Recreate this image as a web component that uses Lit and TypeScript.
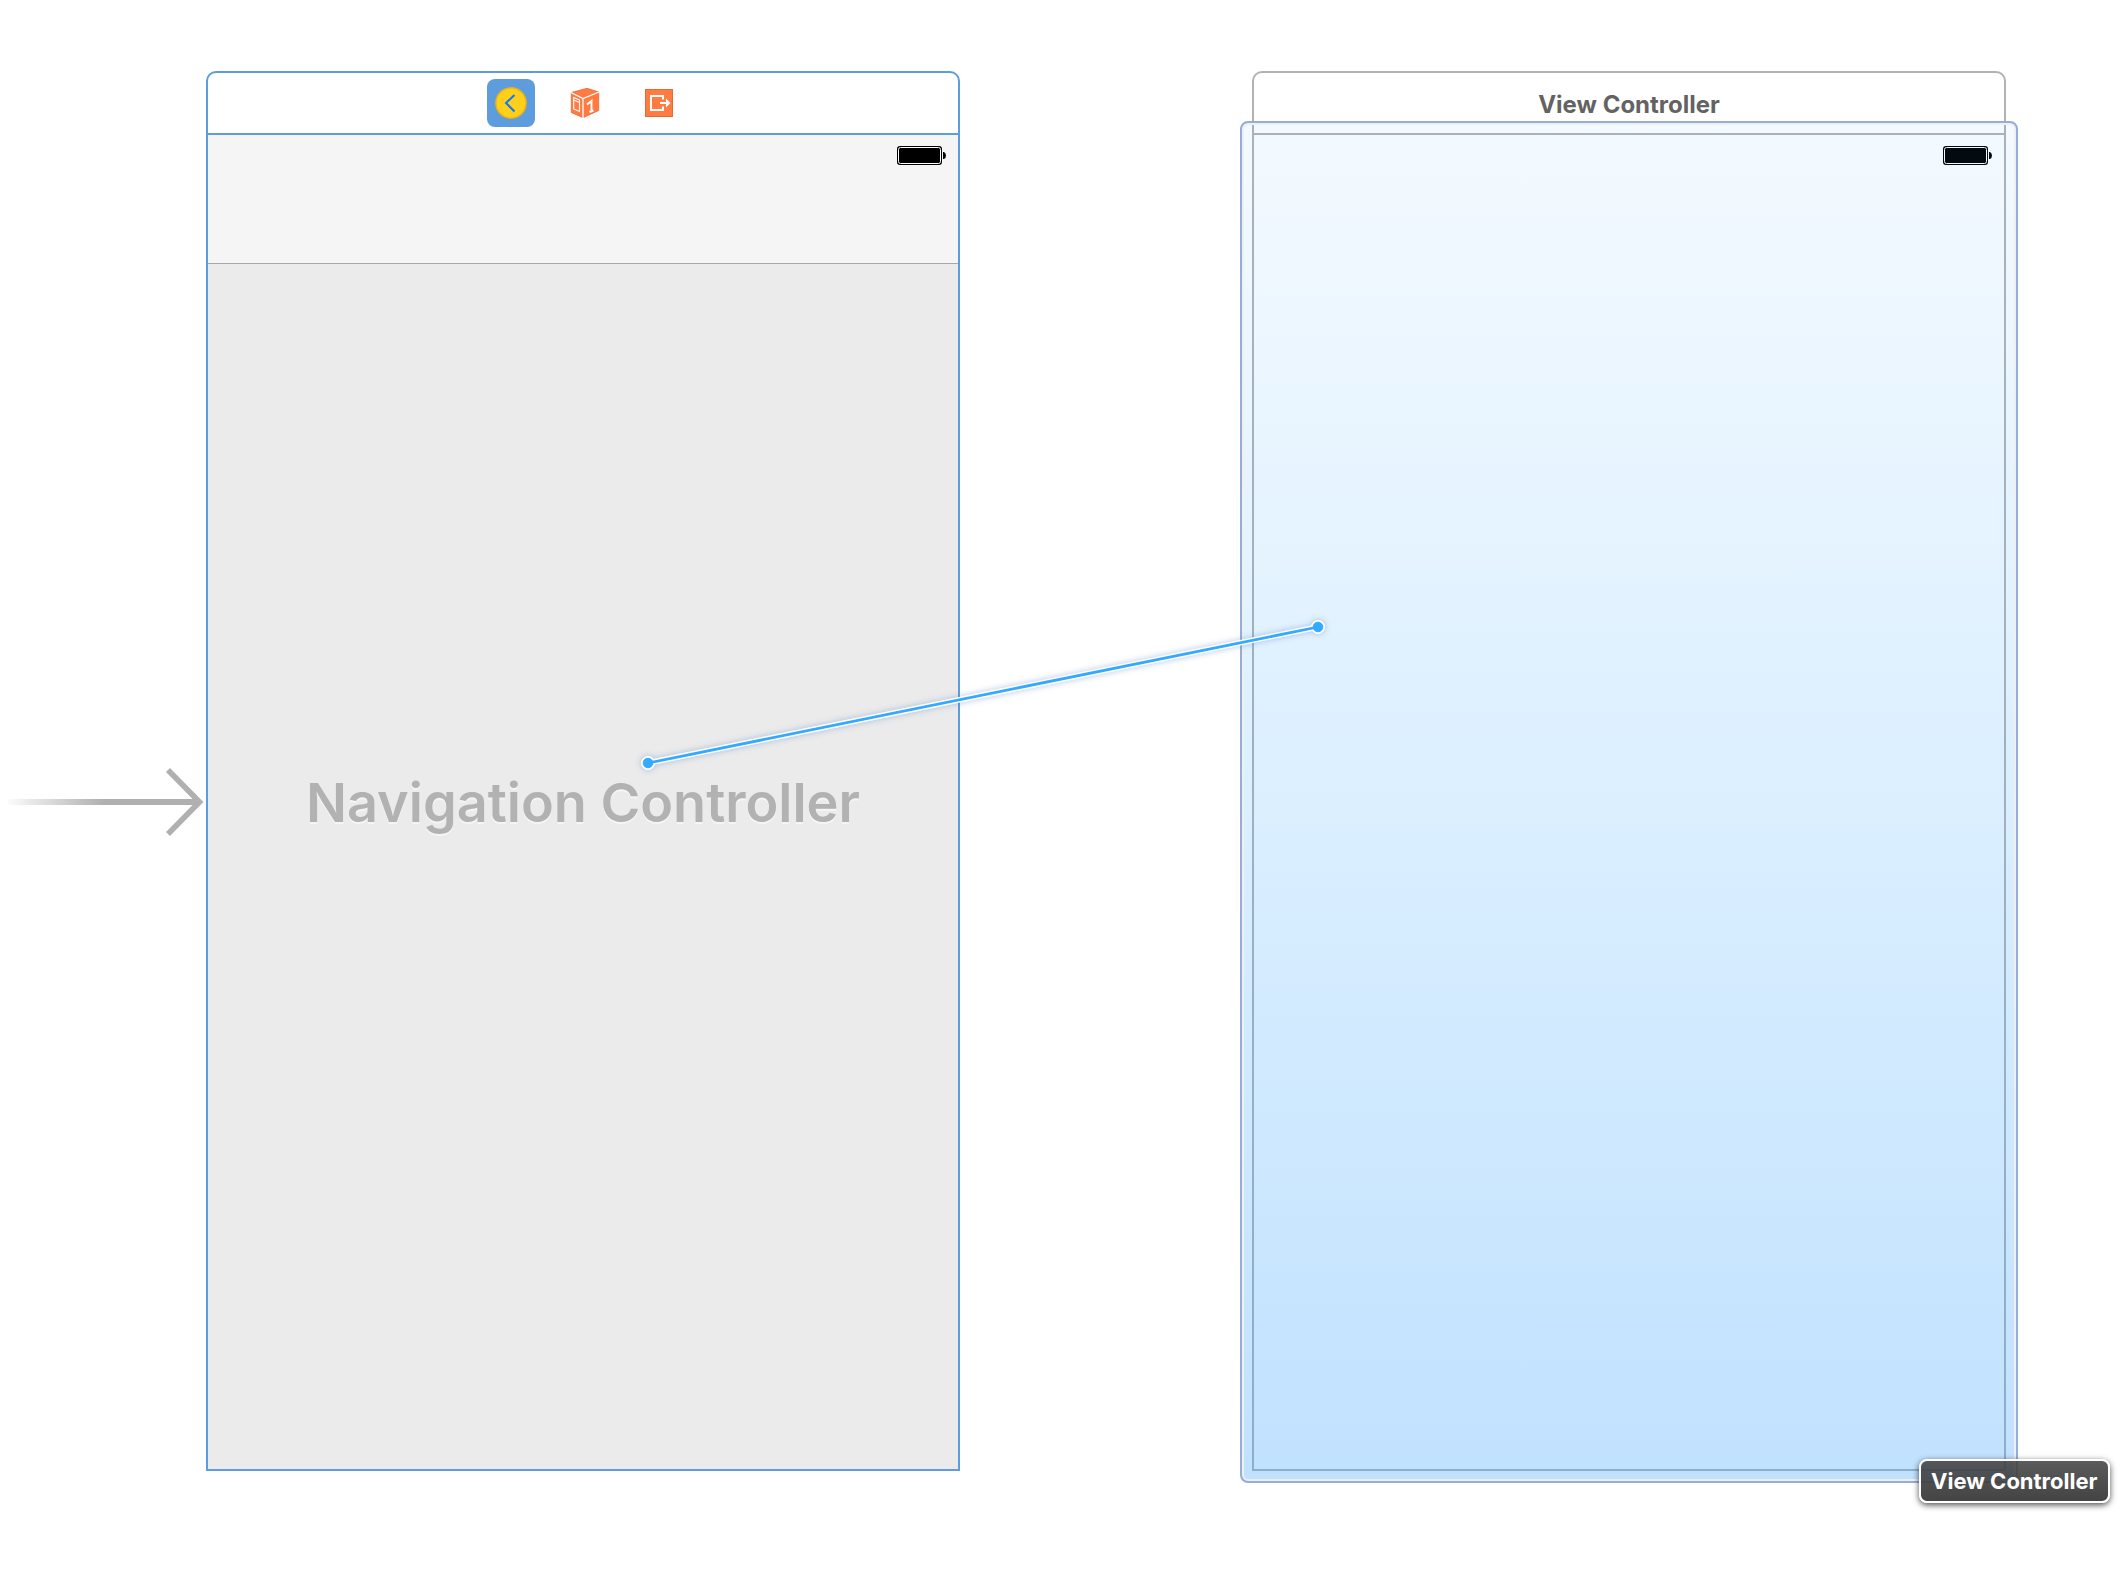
import { LitElement, html, svg, css } from "lit";
import { customElement, property } from "lit/decorators.js";
import { classMap } from "lit/directives/class-map.js";
import { styleMap } from "lit/directives/style-map.js";

const place = (x: number, y: number) => styleMap({ left: `${x}px`, top: `${y}px` });

const battery = html`
  <svg class="battery" viewBox="0 0 49 19" role="img" aria-label="Battery full">
    <rect x="0" y="0" width="45" height="19" rx="3" fill="#000" />
    <rect x="1.5" y="1.5" width="42" height="16" rx="2" fill="none" stroke="#fff" />
    <path d="M46 6h1q2 1 2 3.500t-2 3.500h-1z" fill="#000" />
  </svg>
`;

const controllerIcon = svg`
  <svg viewBox="0 0 48 48" aria-hidden="true">
    <circle cx="24" cy="24" r="15.200" fill="#ffcf1a" stroke="#e6b01f" stroke-width="1.400" />
    <path d="M27.500 16 L19 24 L27.500 32.500" fill="none" stroke="#0a7bf2" stroke-width="2" />
  </svg>`;

const responderIcon = svg`
  <svg viewBox="0 0 48 48" aria-hidden="true">
    <path d="M26 9.300 L37.700 13 L37.700 31.500 L22 38.700 L10.300 33.500 L10.300 13.500 Z" fill="#ff7b42" stroke="#e56a36" stroke-width="0.800" />
    <path d="M10 13.500 L22 19.500 L38 13 M22 19.500 V39" fill="none" stroke="#fff" stroke-width="1.300" />
    <path d="M12.700 18.500 L18.500 21 V32.500 L12.700 30 Z M12.700 21 L18.500 23.500" fill="none" stroke="#fff" stroke-width="1.100" />
    <path d="M26 25.500 L30.500 22 V32 M28.500 33 L32.500 31.500" fill="none" stroke="#fff" stroke-width="1.900" />
  </svg>`;

const exitIcon = svg`
  <svg viewBox="0 0 48 48" aria-hidden="true">
    <rect x="10.500" y="10.500" width="27" height="27" fill="#ff7b42" stroke="#e56a36" />
    <path d="M28 20.500 V17 H16 V31 H28 V27.500" fill="none" stroke="#fff" stroke-width="2" />
    <path d="M25 23 H31 V19.500 L35.500 24 L31 28.500 V25 H25 Z" fill="#fff" />
  </svg>`;

@customElement("scene-dock")
class SceneDock extends LitElement {
  static styles = css`
    :host {
      display: flex;
      justify-content: center;
      gap: 26px;
      padding-left: 4px;
    }
    .item {
      width: 48px;
      height: 48px;
      padding: 0;
      border: 0;
      border-radius: 8px;
      background: transparent;
    }
    .item.selected {
      background: #5e9ddd;
    }
    .item svg {
      display: block;
      width: 48px;
      height: 48px;
    }
  `;
  render() {
    const items = [
      { label: "Navigation Controller", icon: controllerIcon, selected: true },
      { label: "First Responder", icon: responderIcon, selected: false },
      { label: "Exit", icon: exitIcon, selected: false },
    ];
    return items.map(
      (i) => html`<button
        class=${classMap({ item: true, selected: i.selected })}
        aria-label=${i.label}
        aria-pressed=${i.selected ? "true" : "false"}
      >${i.icon}</button>`
    );
  }
}

@customElement("storyboard-scene")
class StoryboardScene extends LitElement {
  @property() kind: "navigation" | "view" = "view";
  @property() name = "";

  static styles = css`
    :host {
      display: block;
      box-sizing: border-box;
      --line: #b2b2b2;
    }
    :host([kind="navigation"]) {
      --line: #5e9ddd;
    }
    .scene {
      display: flex;
      flex-direction: column;
      box-sizing: border-box;
      min-height: 1400px;
      border: 2px solid var(--line);
      border-radius: 10px 10px 0 0;
      background: #fff;
    }
    .header {
      display: flex;
      align-items: center;
      justify-content: center;
      height: 60px;
      border-bottom: 2px solid var(--line);
    }
    .title {
      margin: 0;
      padding-top: 4px;
      font: 700 24px/28px Inter, "Liberation Sans", sans-serif;
      color: #636363;
    }
    .status {
      display: flex;
      justify-content: flex-end;
      padding: 11px 12px 0 0;
    }
    .battery {
      display: block;
      width: 49px;
      height: 19px;
    }
    .navbar {
      box-sizing: border-box;
      height: 129px;
      border-bottom: 1px solid #a7a7a7;
      background: #f5f5f5;
    }
    .body {
      display: flex;
      flex: 1;
      align-items: center;
      justify-content: center;
    }
    .navigation .body {
      background: #ebebeb;
    }
    .placeholder {
      margin: 0;
      padding-bottom: 128px;
      font: 600 54px/68px Inter, "Liberation Sans", sans-serif;
      color: #b2b2b2;
      text-shadow: 0 2px 0 #f5f5f5;
      white-space: nowrap;
    }
  `;

  render() {
    const nav = this.kind === "navigation";
    return html`
      <article class=${classMap({ scene: true, navigation: nav })}>
        <header class="header">
          ${nav ? html`<scene-dock></scene-dock>` : html`<h2 class="title">${this.name}</h2>`}
        </header>
        <div class=${classMap({ navbar: nav })}><div class="status">${battery}</div></div>
        <div class="body">${nav ? html`<p class="placeholder">${this.name}</p>` : null}</div>
      </article>
    `;
  }
}

@customElement("app-root")
class AppRoot extends LitElement {
  static styles = css`
    :host {
      display: block;
    }
    .canvas {
      position: relative;
      min-height: 100vh;
      overflow: hidden;
      background: #fff;
    }
    .node,
    .entry,
    .connection,
    .target,
    .hint {
      position: absolute;
    }
    .node {
      width: 754px;
    }
    .entry {
      width: 200px;
      height: 72px;
    }
    .target {
      box-sizing: border-box;
      width: 778px;
      height: 1362px;
      border: 2px solid #94aed8;
      border-radius: 8px;
      background: linear-gradient(
        rgba(64, 170, 255, 0.06),
        rgba(64, 170, 255, 0.19) 50%,
        rgba(64, 164, 255, 0.33)
      );
      box-shadow: inset 0 0 0 2px #eeeff1;
    }
    .connection {
      width: 710px;
      height: 176px;
      overflow: visible;
    }
    .hint {
      box-sizing: border-box;
      padding: 7px 10px;
      border: 2px solid #fff;
      border-radius: 8px;
      background: linear-gradient(rgba(64, 64, 64, 0.86), rgba(56, 56, 56, 0.94));
      box-shadow: 0 2px 6px rgba(0, 0, 0, 0.7);
      font: 700 22px/26px Inter, "Liberation Sans", sans-serif;
      color: #fff;
      white-space: nowrap;
    }
  `;

  render() {
    return html`
      <main class="canvas">
        <svg class="entry" style=${place(8, 766)} viewBox="0 0 200 72" role="img" aria-label="Initial scene">
          <defs>
            <linearGradient id="fade" x1="0" x2="1">
              <stop offset="0" stop-color="#b0b0b0" stop-opacity="0.050" />
              <stop offset="0.500" stop-color="#b0b0b0" />
            </linearGradient>
          </defs>
          <rect x="0" y="33" width="190" height="6" fill="url(#fade)" />
          <path d="M160 4 L191.500 36 L160 68" fill="none" stroke="#b0b0b0" stroke-width="5.600" />
        </svg>
        <storyboard-scene class="node" style=${place(206, 71)} kind="navigation" name="Navigation Controller"></storyboard-scene>
        <storyboard-scene class="node" style=${place(1252, 71)} kind="view" name="View Controller"></storyboard-scene>
        <div class="target" style=${place(1240, 121)}></div>
        <svg class="connection" style=${place(628, 607)} viewBox="0 0 710 176" aria-hidden="true">
          <defs>
            <filter id="glow" filterUnits="userSpaceOnUse" x="-10" y="-10" width="730" height="196">
              <feDropShadow dx="0" dy="0" stdDeviation="3" flood-color="#4a78b8" flood-opacity="0.450" />
            </filter>
          </defs>
          <g filter="url(#glow)" fill="#fff" stroke="#fff">
            <path d="M20 156 L690 20" stroke-width="5.500" />
            <circle cx="20" cy="156" r="6.500" />
            <circle cx="690" cy="20" r="6.500" />
          </g>
          <g fill="#33a9ff" stroke="#33a9ff">
            <path d="M20 156 L690 20" stroke-width="2.800" />
            <circle cx="20" cy="156" r="4.800" />
            <circle cx="690" cy="20" r="4.800" />
          </g>
        </svg>
        <div class="hint" role="tooltip" style=${place(1919, 1459)}>View Controller</div>
      </main>
    `;
  }
}
